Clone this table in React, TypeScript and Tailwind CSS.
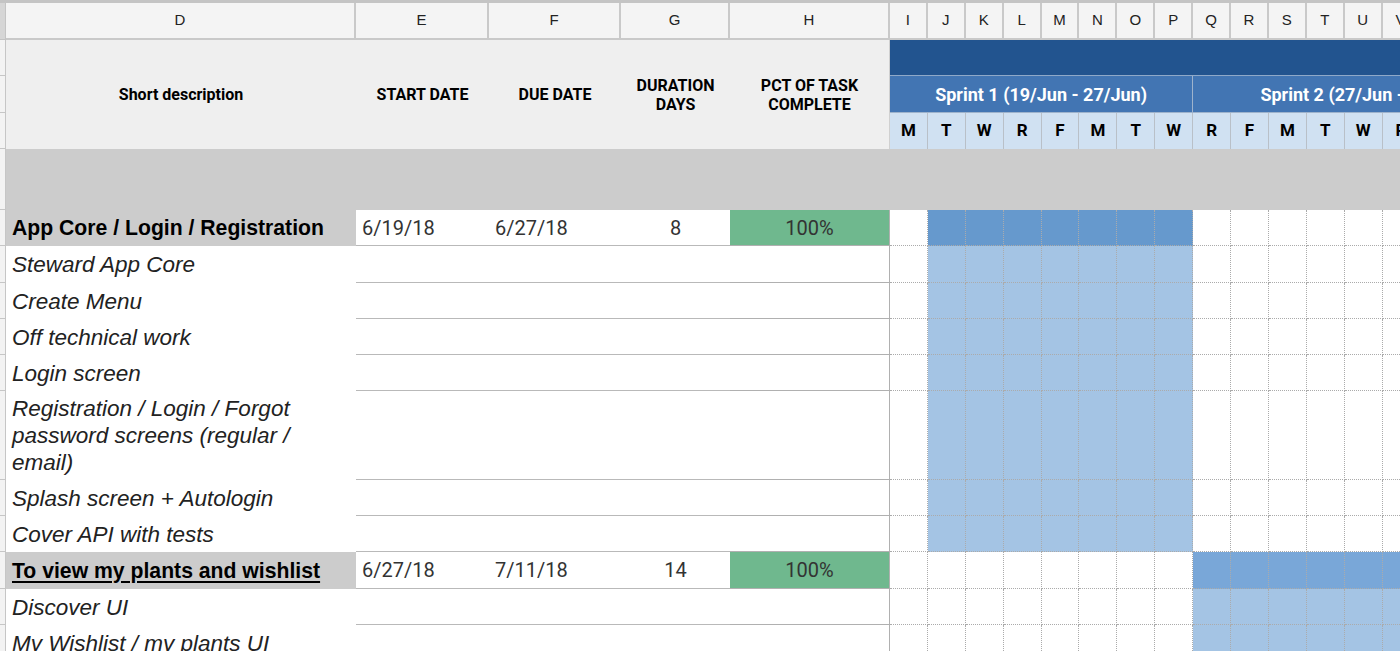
import React from 'react';

const LETTERS = ['D', 'E', 'F', 'G', 'H'];
const GANTT_LETTERS = ['I', 'J', 'K', 'L', 'M', 'N', 'O', 'P', 'Q', 'R', 'S', 'T', 'U', 'V', 'W', 'X', 'Y'];
const DAYS = ['M', 'T', 'W', 'R', 'F', 'M', 'T', 'W', 'R', 'F', 'M', 'T', 'W', 'R', 'F', 'M', 'T'];

type Task = {
  name: React.ReactNode;
  group?: boolean;
  underline?: boolean;
  start?: string;
  due?: string;
  dur?: string;
  pct?: string;
  from: number;
  to: number;
};

const tasks: Task[] = [
  { name: 'App Core / Login / Registration', group: true, start: '6/19/18', due: '6/27/18', dur: '8', pct: '100%', from: 1, to: 7 },
  { name: 'Steward App Core', from: 1, to: 7 },
  { name: 'Create Menu', from: 1, to: 7 },
  { name: 'Off technical work', from: 1, to: 7 },
  { name: 'Login screen', from: 1, to: 7 },
  {
    name: (
      <>
        Registration / Login / Forgot
        <br />
        password screens (regular /
        <br />
        email)
      </>
    ),
    from: 1,
    to: 7,
  },
  { name: 'Splash screen + Autologin', from: 1, to: 7 },
  { name: 'Cover API with tests', from: 1, to: 7 },
  { name: 'To view my plants and wishlist', group: true, underline: true, start: '6/27/18', due: '7/11/18', dur: '14', pct: '100%', from: 8, to: 16 },
  { name: 'Discover UI', from: 8, to: 16 },
  { name: 'My Wishlist / my plants UI', from: 8, to: 16 },
];

const gutter = 'bg-[#f3f3f3] border-r border-b border-[#c6c6c6]';
const dataCell = 'bg-white border-b border-[#b9b9b9] flex items-center font-[Roboto,sans-serif] text-[20px] text-[#333]';

function GanttCells({ task }: { task: Task }) {
  return (
    <>
      {GANTT_LETTERS.map((_, i) => {
        const inBar = i >= task.from && i <= task.to;
        let bg = 'bg-white';
        if (inBar) {
          if (task.group) bg = task.from === 1 ? 'bg-[#6699cd]' : 'bg-[#79a7d8]';
          else bg = 'bg-[#a4c4e4]';
        }
        return <div key={i} className={`${bg} border-r border-b border-dotted border-[#ababab]`} />;
      })}
    </>
  );
}

function TaskRow({ task }: { task: Task }) {
  return (
    <>
      <div className={gutter} />
      {task.group ? (
        <div className="bg-[#cccccc] flex items-center px-[6px] font-['Liberation_Sans',Arial,sans-serif] font-bold text-[21.2px] text-black">
          <span className={task.underline ? 'underline underline-offset-[3px] decoration-2' : ''}>{task.name}</span>
        </div>
      ) : (
        <div className="bg-white flex items-center px-[6px] font-['Liberation_Sans',Arial,sans-serif] italic text-[22.5px] leading-[27px] text-[#222]">
          <span>{task.name}</span>
        </div>
      )}
      <div className={`${dataCell} px-[6px]`}>{task.start}</div>
      <div className={`${dataCell} px-[6px]`}>{task.due}</div>
      <div className={`${dataCell} justify-center`}>{task.dur}</div>
      <div
        className={`${task.group ? 'bg-[#6fb88e]' : 'bg-white'} border-b border-r border-[#b0b0b0] flex items-center justify-center font-[Roboto,sans-serif] text-[20px] text-[#333]`}
      >
        {task.pct}
      </div>
      <GanttCells task={task} />
    </>
  );
}

export default function App() {
  return (
    <div className="w-[1400px] h-[651px] overflow-hidden bg-white border-t-[3px] border-[#c4c4c4]">
      <div className="grid w-max grid-cols-[6px_350px_133px_132px_109px_160px_repeat(17,37.9px)] grid-rows-[37px_36px_37px_36px_61px_36px_37px_36px_36px_36px_89px_36px_36px_37px_36px_36px]">
        {/* column letters */}
        <div className="bg-[#d6d6d6] border-r border-b border-[#c4c4c4]" />
        {[...LETTERS, ...GANTT_LETTERS].map((l) => (
          <div
            key={l}
            className="bg-[#f4f4f4] border-r-2 border-b-2 border-[#c9c9c9] flex items-center justify-center font-['Liberation_Sans',Arial,sans-serif] text-[15px] text-[#222]"
          >
            {l}
          </div>
        ))}

        {/* header block */}
        <div className={gutter} />
        <div className="row-span-3 bg-[#efefef] flex items-center justify-center font-[Roboto,sans-serif] font-bold text-[16px] text-black">
          Short description
        </div>
        <div className="row-span-3 bg-[#efefef] flex items-center justify-center font-[Roboto,sans-serif] font-bold text-[16px] text-black">
          START DATE
        </div>
        <div className="row-span-3 bg-[#efefef] flex items-center justify-center font-[Roboto,sans-serif] font-bold text-[16px] text-black">
          DUE DATE
        </div>
        <div className="row-span-3 bg-[#efefef] flex items-center justify-center text-center font-[Roboto,sans-serif] font-bold text-[16px] leading-[19px] text-black">
          DURATION
          <br />
          DAYS
        </div>
        <div className="row-span-3 bg-[#efefef] border-r border-[#d0d0d0] flex items-center justify-center text-center font-[Roboto,sans-serif] font-bold text-[16px] leading-[19px] text-black">
          PCT OF TASK
          <br />
          COMPLETE
        </div>
        <div className="col-span-17 bg-[#22548f] border-b border-[#8fa9c9]" />

        <div className={gutter} />
        <div className="col-span-8 bg-[#4275b3] border-r border-b border-[#9eb3cc] flex items-center justify-center font-[Roboto,sans-serif] font-bold text-[18px] text-white">
          Sprint 1 (19/Jun - 27/Jun)
        </div>
        <div className="col-span-9 bg-[#4275b3] border-b border-[#9eb3cc] flex items-center justify-center font-[Roboto,sans-serif] font-bold text-[18px] text-white whitespace-nowrap">
          Sprint 2 (27/Jun - 11/Jul)
        </div>

        <div className={gutter} />
        {DAYS.map((d, i) => (
          <div
            key={i}
            className="bg-[#d0e1f2] border-r border-[#b9c0c8] flex items-center justify-center font-[Roboto,sans-serif] font-bold text-[17px] text-black"
          >
            {d}
          </div>
        ))}

        {/* spacer row */}
        <div className={gutter} />
        <div className="col-span-22 bg-[#cccccc]" />

        {tasks.map((t, i) => (
          <TaskRow key={i} task={t} />
        ))}
      </div>
    </div>
  );
}
